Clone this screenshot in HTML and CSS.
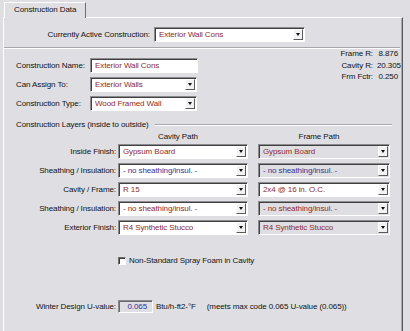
FILE: index.html
```html
<!DOCTYPE html>
<html lang="en">
<head>
    <meta charset="UTF-8">
    <title>Construction Data</title>
    <link rel="stylesheet" href="styles.css">
</head>
<body>
    <div class="tabs">
        <div class="tab">Construction Data</div>
    </div>
    <div class="panel">
        <div class="active-row">
            <span class="active-label">Currently Active Construction:</span>
            <div class="combo active-combo"><span class="val">Exterior Wall Cons</span><span class="drop"></span></div>
        </div>
        <div class="sep"></div>

        <div class="info">
            <div class="fields">
                <span class="flabel">Construction Name:</span>
                <div class="edit"><span class="val">Exterior Wall Cons</span></div>
                <span class="flabel">Can Assign To:</span>
                <div class="combo"><span class="val">Exterior Walls</span><span class="drop"></span></div>
                <span class="flabel">Construction Type:</span>
                <div class="combo"><span class="val">Wood Framed Wall</span><span class="drop"></span></div>
            </div>
            <div class="rvalues">
                <span>Frame R:</span><span>8.876</span>
                <span>Cavity R:</span><span>20.305</span>
                <span>Frm Fctr:</span><span>0.250</span>
            </div>
        </div>

        <div class="layers-title">
            <span>Construction Layers (inside to outside)</span>
            <span class="rule"></span>
        </div>
        <div class="layers">
            <span></span>
            <span class="head cav-head">Cavity Path</span>
            <span class="head">Frame Path</span>

            <span class="llabel">Inside Finish:</span>
            <div class="combo cav"><span class="val">Gypsum Board</span><span class="drop"></span></div>
            <div class="combo dim"><span class="val">Gypsum Board</span><span class="drop"></span></div>

            <span class="llabel">Sheathing / Insulation:</span>
            <div class="combo cav blue"><span class="val">- no sheathing/insul. -</span><span class="drop"></span></div>
            <div class="combo dim blue"><span class="val">- no sheathing/insul. -</span><span class="drop"></span></div>

            <span class="llabel">Cavity / Frame:</span>
            <div class="combo cav"><span class="val">R 15</span><span class="drop"></span></div>
            <div class="combo"><span class="val">2x4 @ 16 in. O.C.</span><span class="drop"></span></div>

            <span class="llabel">Sheathing / Insulation:</span>
            <div class="combo cav"><span class="val">- no sheathing/insul. -</span><span class="drop"></span></div>
            <div class="combo dim"><span class="val">- no sheathing/insul. -</span><span class="drop"></span></div>

            <span class="llabel">Exterior Finish:</span>
            <div class="combo cav"><span class="val">R4 Synthetic Stucco</span><span class="drop"></span></div>
            <div class="combo dim"><span class="val">R4 Synthetic Stucco</span><span class="drop"></span></div>
        </div>

        <div class="check-row">
            <span class="checkbox"></span>
            <span>Non-Standard Spray Foam in Cavity</span>
        </div>

        <div class="uvalue">
            <span class="ulabel">Winter Design U-value:</span>
            <span class="ubox">0.065</span>
            <span class="units">Btu/h-ft2-°F</span>
            <span class="meets">(meets max code 0.065 U-value (0.065))</span>
        </div>
    </div>
</body>
</html>
```

FILE: styles.css
```css
*{
    margin:0;
    padding:0;
    box-sizing:border-box;
}
body{
    width:410px;
    height:331px;
    overflow:hidden;
    background:#dfdfe3;
    font-family:"Liberation Sans", Arial, sans-serif;
    font-size:8px;
    letter-spacing:-0.1px;
    color:#111;
}

/* tab strip */
.tabs{
    height:17px;
    padding:2px 0 0 4px;
    display:flex;
}
.tab{
    position:relative;
    z-index:1;
    width:82px;
    height:16px;
    padding-left:9px;
    line-height:14px;
    background:#dfdfe3;
    border:1px solid #fff;
    border-bottom:none;
    border-right-color:#6e6e6e;
}
.panel{
    margin-left:3px;
    width:400px;
    height:320px;
    border-top:1px solid #fff;
    border-left:1px solid #fff;
    border-right:1px solid #5a5a5a;
    box-shadow:inset -1px 0 #a9a9ad;
}

/* top row */
.active-row{
    margin-top:9px;
    display:flex;
    align-items:center;
}
.active-label{
    width:146px;
    text-align:right;
}
.active-combo{
    margin-left:4px;
    width:151px;
    height:14px;
}
.sep{
    margin-top:5px;
    width:396px;
    height:2px;
    border-top:1px solid #a8a8ac;
    border-bottom:1px solid #fff;
}

/* name / type / r-values */
.info{
    display:flex;
    justify-content:space-between;
    align-items:flex-start;
}
.fields{
    margin:9px 0 0 12px;
    display:grid;
    grid-template-columns:74px 107px;
    grid-auto-rows:14px;
    row-gap:5px;
    align-items:center;
}
.fields .edit{
    width:108px;
}
.rvalues{
    margin:-1px 4px 0 0;
    display:grid;
    grid-template-columns:auto 21px;
    column-gap:4px;
    line-height:11.5px;
    text-align:right;
}

/* layers */
.layers-title{
    margin:10px 0 0 12px;
    display:flex;
    align-items:center;
    line-height:10px;
}
.layers-title .rule{
    margin-left:6px;
    width:237px;
    height:2px;
    border-top:1px solid #a8a8ac;
    border-bottom:1px solid #fff;
}
.layers{
    margin-left:12px;
    display:grid;
    grid-template-columns:102px 140px 132px;
    grid-template-rows:10px;
    grid-auto-rows:15px;
    row-gap:4px;
    align-items:center;
}
.layers .head{
    margin-bottom:-2px;
    padding-right:10px;
    text-align:center;
}
.layers .cav-head{
    width:130px;
}
.llabel{
    padding-right:2px;
    text-align:right;
    white-space:nowrap;
}
.combo.cav{
    width:130px;
}

/* combo + edit boxes */
.combo, .edit{
    display:flex;
    align-items:stretch;
    height:15px;
    padding:1px 1px 1px 4px;
    background:#fff;
    color:#8f2a2a;
    border:1px solid;
    border-color:#8c8c90 #fff #fff #8c8c90;
    box-shadow:inset 1px 1px #404040;
}
.combo .val, .edit .val{
    flex:1;
    white-space:nowrap;
    overflow:hidden;
    line-height:11px;
}
.combo.dim{
    background:#dfdfe3;
}
.combo.blue{
    color:#35358f;
}
.drop{
    width:10px;
    display:flex;
    justify-content:center;
    align-items:center;
    background:#f2f2f4;
    border:1px solid;
    border-color:#fff #5a5a5a #5a5a5a #fff;
}
.drop::after{
    content:"";
    border-left:2.5px solid transparent;
    border-right:2.5px solid transparent;
    border-top:3px solid #111;
}

/* checkbox */
.check-row{
    margin:21px 0 0 114px;
    display:flex;
    align-items:center;
    gap:3px;
    line-height:10px;
}
.checkbox{
    width:8px;
    height:8px;
    background:#fff;
    border:1px solid;
    border-color:#707070 #fff #fff #707070;
    box-shadow:inset 1px 1px #3a3a3a;
}

/* u-value */
.uvalue{
    margin:34px 0 0 12px;
    display:flex;
    align-items:center;
    line-height:10px;
}
.ulabel{
    width:102px;
    padding-right:2px;
    text-align:right;
}
.ubox{
    width:35px;
    height:13px;
    padding-right:5px;
    text-align:right;
    line-height:11px;
    color:#2f2f9a;
    border:1px solid;
    border-color:#8c8c90 #fff #fff #8c8c90;
    box-shadow:inset 1px 1px #6a6a6e;
}
.units{
    margin-left:3px;
}
.meets{
    margin-left:11px;
}
```
